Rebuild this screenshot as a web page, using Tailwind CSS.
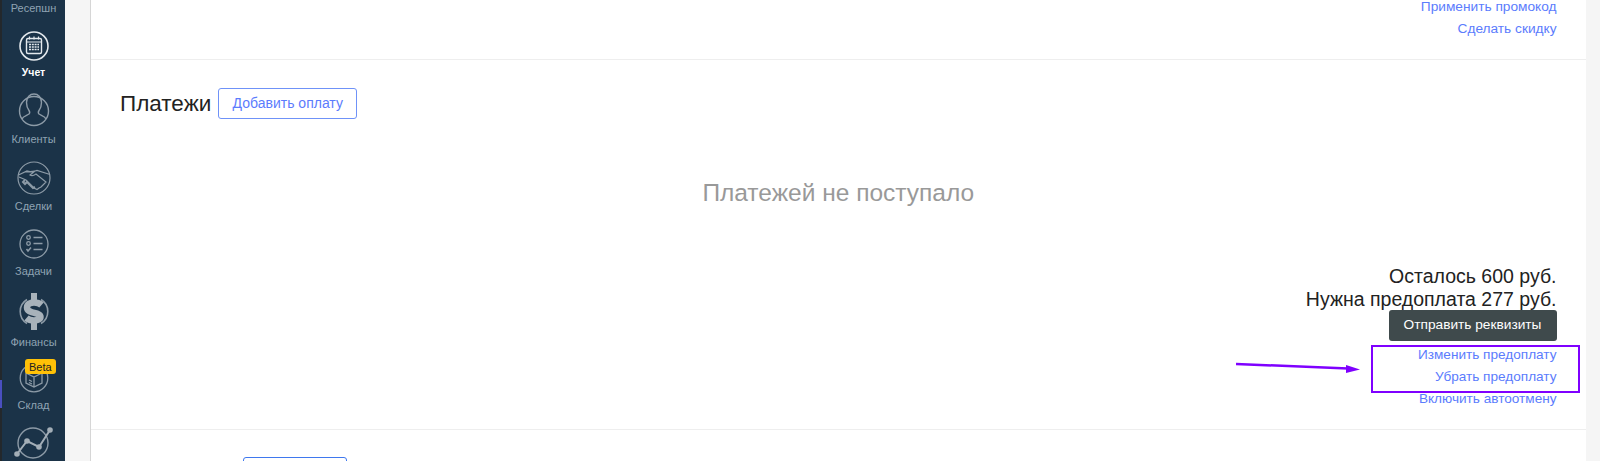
<!DOCTYPE html>
<html lang="ru">
<head>
<meta charset="utf-8">
<script src="https://cdn.jsdelivr.net/npm/@tailwindcss/browser@4"></script>
</head>
<body class="h-[461px] overflow-hidden bg-[#f5f5f5] font-['Liberation_Sans',Arial,sans-serif]">
<div class="relative flex h-[461px] overflow-hidden">
  <!-- sidebar -->
  <aside class="relative flex h-[461px] w-[65px] shrink-0 flex-col border-l-[2px] border-[#23282c] bg-[#1b3348] text-[11px] leading-[13px] text-[#8fa3b3]">
    <div class="absolute -left-[2px] top-[380px] h-[28px] w-[2px] bg-[#4a4fc0]"></div>
    <div class="flex h-[15px] items-end justify-center">Ресепшн</div>
    <div class="flex h-[64px] flex-col items-center justify-end gap-[5px] text-[10.500px] font-bold text-white">
      <svg class="h-[30px] w-[30px]" viewBox="0 0 30 30" fill="none" stroke="#e4e9ed"><circle cx="15" cy="15" r="14" stroke-width="1.600"/><rect x="7.500" y="7.500" width="15" height="15" rx="1.500" stroke-width="1.400"/><path d="M8 11h14M10.500 5.500v3M15 5.500v3M19.500 5.500v3" stroke-width="1.200"/><path d="M10 13.500h10M10 16h10M10 18.500h10" stroke-width="1.500" stroke-dasharray="2 .8"/></svg>
      <span>Учет</span>
    </div>
    <div class="flex h-[68px] flex-col items-center justify-end gap-[5px]">
      <svg class="h-[36px] w-[36px]" viewBox="0 0 36 36" fill="none" stroke="#8d9ba7" stroke-width="1.400"><circle cx="18" cy="19" r="14.500"/><path d="M6 27c1-3 5-3.500 7-5 1-1 1-2 0-3.500-1.500-2-2.500-5-2.500-8C10.500 5 14 2 18 2s7.500 3 7.500 8.500c0 3-1 6-2.500 8-1 1.500-1 2.500 0 3.500 2 1.500 6 2 7 5"/></svg>
      <span>Клиенты</span>
    </div>
    <div class="flex h-[67px] flex-col items-center justify-end gap-[5px]">
      <svg class="h-[34px] w-[34px]" viewBox="0 0 34 34" fill="none" stroke="#8d9ba7" stroke-width="1.200"><circle cx="17" cy="17" r="16"/><path d="M1.500 14 10 10l5 1 5-1.500 13 4M9 11l9-1-5 4c2 1.500 4 .5 6-1l10 8-3 3-2 2-2 1-2 1.500-3-1.500-8-8-7-3"/><path d="M8 19l-2 2 2 2 2-2 2 2 2 2 2 2 2-1" stroke-width="2"/></svg>
      <span>Сделки</span>
    </div>
    <div class="flex h-[65px] flex-col items-center justify-end gap-[6px]">
      <svg class="h-[30px] w-[30px]" viewBox="0 0 30 30" fill="none" stroke="#8d9ba7" stroke-width="1.300"><circle cx="15" cy="15" r="14"/><circle cx="9.500" cy="8.500" r="1.800"/><circle cx="9.500" cy="14.500" r="1.800"/><path d="M7.500 20l1.500 2 3-3.500M14.500 8.500h9M14.500 14.500h9M14.500 20.500h9" stroke-width="1.500"/></svg>
      <span>Задачи</span>
    </div>
    <div class="flex h-[72px] flex-col items-center justify-end gap-[6px]">
      <svg class="h-[38px] w-[32px]" viewBox="0 0 32 38" fill="none"><path d="M9 7.500a14 14 0 0 0 0 24M23 7.500a14 14 0 0 1 0 24" stroke="#8d9ba7" stroke-width="1.600"/><path d="M23.500 13c-2-1.800-4.500-2.500-7.500-2.500-4 0-7 1.800-7 5 0 6.700 13.500 4.200 13.500 9.500 0 2.800-4.500 3.500-6.500 3.500-2.500 0-5.500-.8-7.500-2.500" stroke="#a8b2ba" stroke-width="6.500"/><path d="M13 1h6v8h-6zM13 30h6v8h-6z" fill="#a8b2ba"/></svg>
      <span>Финансы</span>
    </div>
    <div class="relative flex h-[63px] flex-col items-center justify-end gap-[6px]">
      <svg class="h-[30px] w-[30px]" viewBox="0 0 30 30" fill="none" stroke="#8d9ba7" stroke-width="1.300"><circle cx="15" cy="15" r="13.800"/><path d="M7 10l8-4 8 4v10l-8 4-8-4zM7 10l8 4 8-4M15 14v10M10 17l3 1.500M10 19.500l3 1.500"/></svg>
      <span>Склад</span>
      <span class="absolute left-[23px] top-[10px] rounded-[3px] bg-[#ffc107] px-[4px] py-[1.500px] text-[11px] leading-[12px] text-[#222]">Beta</span>
    </div>
    <div class="flex flex-1 justify-center pt-[11px]">
      <svg class="h-[38px] w-[42px]" viewBox="0 0 42 38" fill="none" stroke="#8d9ba7" stroke-width="1.400"><circle cx="20" cy="20" r="15"/><path d="M4 31 14 18l12 6L37 7" stroke="#a3aeb7" stroke-width="2"/><circle cx="4" cy="31" r="2.800" fill="#a3aeb7" stroke="none"/><circle cx="14" cy="18" r="2.800" fill="#a3aeb7" stroke="none"/><circle cx="26" cy="24" r="2.800" fill="#a3aeb7" stroke="none"/><circle cx="37" cy="7" r="2.800" fill="#a3aeb7" stroke="none"/></svg>
    </div>
  </aside>

  <!-- main card -->
  <main class="ml-[25px] flex h-[461px] w-[1496px] shrink-0 flex-col border-l border-[#d6d6d6] bg-white">
    <section class="flex h-[60px] shrink-0 flex-col items-end border-b border-[#eeeeee] pr-[29.500px] text-[13.700px] leading-[22px] text-[#5b7cfd]">
      <div class="-mt-[4px]">Применить промокод</div>
      <div>Сделать скидку</div>
    </section>
    <section class="flex h-[370px] shrink-0 flex-col border-b border-[#eeeeee] pr-[29.500px] pl-[29px]">
      <div class="mt-[28px] flex items-center gap-[7px]">
        <h2 class="-mt-[1px] text-[22.500px] leading-[31px] text-[#222222]">Платежи</h2>
        <button class="h-[31px] w-[139px] rounded-[3px] border border-[#6f92f8] text-[14px] text-[#5b7cfd]">Добавить оплату</button>
      </div>
      <div class="mt-[59px] text-center text-[24.500px] leading-[30px] text-[#999999]">Платежей не поступало</div>
      <div class="mt-[57px] flex flex-col items-end">
        <div class="text-[19.500px] leading-[22.500px] text-[#222222]">Осталось 600 руб.</div>
        <div class="text-[19.500px] leading-[22.500px] text-[#222222]">Нужна предоплата 277 руб.</div>
        <button class="h-[31px] w-[168px] rounded-[3px] bg-[#3f4a4c] text-[13.700px] text-white">Отправить реквизиты</button>
        <div class="mt-[3px] text-[13.600px] leading-[22px] text-[#5b7cfd]">Изменить предоплату</div>
        <div class="text-[13.600px] leading-[22px] text-[#5b7cfd]">Убрать предоплату</div>
        <div class="text-[13.600px] leading-[22px] text-[#5b7cfd]">Включить автоотмену</div>
      </div>
    </section>
    <section class="flex-1 pl-[152px] pt-[27px]">
      <div class="h-[40px] w-[104px] rounded-[3px] border border-[#3f78ee]"></div>
    </section>
  </main>

  <!-- annotation overlay -->
  <div class="absolute left-[1371px] top-[345px] h-[48px] w-[209px] border-[2px] border-[#7f00ff]"></div>
  <svg class="absolute left-[1230px] top-[355px] h-[22px] w-[135px]" viewBox="0 0 135 22" fill="none">
    <path d="M6 9l112 4.500" stroke="#7f00ff" stroke-width="2.500"/>
    <path d="M116 10l14 4.500-14 3.500z" fill="#7f00ff"/>
  </svg>
</div>
</body>
</html>
